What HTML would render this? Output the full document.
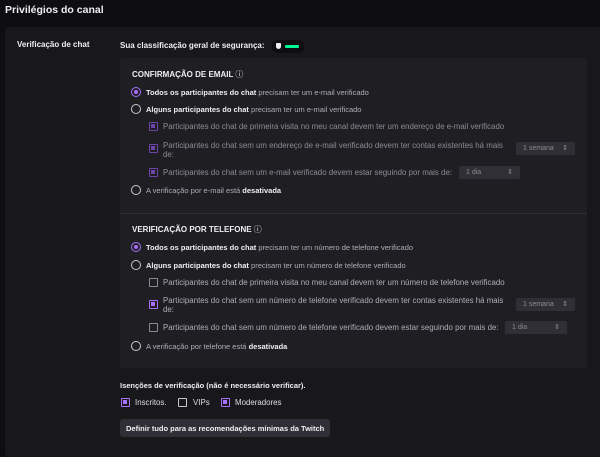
<!DOCTYPE html>
<html><head><meta charset="utf-8"><style>
*{margin:0;padding:0;box-sizing:border-box}
body{width:600px;height:448px;background:#0e0e10;font-family:"Liberation Sans",sans-serif;color:#dedee3;overflow:hidden;position:relative}
.a{position:absolute;white-space:nowrap;font-size:7.9px;line-height:9px;color:#adadb8}
.m{font-size:7.5px}
.b{font-weight:bold;color:#efeff1}
.r{position:absolute;width:10px;height:10px;border-radius:50%;border:1.5px solid #c8c8d0}
.r.on{border-color:#a970ff}
.r.on::after{content:"";position:absolute;left:1.5px;top:1.5px;width:4px;height:4px;border-radius:50%;background:#a970ff}
.c{position:absolute;width:9px;height:9px;border:1.3px solid #8b8b93;border-radius:1px}
.c.on{border-color:#6b46a8}
.c.on::after{content:"";position:absolute;left:1.2px;top:1.2px;width:4px;height:4px;background:#6b46a8}
.c.on2{border-color:#a970ff}
.c.on2::after{content:"";position:absolute;left:1.2px;top:1.2px;width:4px;height:4px;background:#a970ff}
.s{position:absolute;height:13px;background:#2f2f35;border-radius:2px;font-size:7px;color:#8b8b93;line-height:13px;padding-left:7px}
.s::after{content:"⇕";position:absolute;right:7px;top:0;font-size:7px}
.t{position:absolute;font-size:8px;font-weight:bold;color:#efeff1;white-space:nowrap}
.dim{color:#8b8b93}
</style></head><body>
<div class="a b" style="left:5px;top:3px;font-size:10.5px;line-height:14px">Privilégios do canal</div>
<div style="position:absolute;left:5px;top:27px;width:600px;height:430px;background:#18181b;border-radius:3px"></div>
<div class="a b" style="left:17px;top:40px;font-size:8px">Verificação de chat</div>
<div class="a b" style="left:120px;top:41px;font-size:8px">Sua classificação geral de segurança:</div>
<div style="position:absolute;left:272px;top:40px;width:32px;height:13px;border-radius:6px;background:#0e0e10"></div>
<div style="position:absolute;left:276px;top:43px;width:5px;height:6px;background:#efeff1;border-radius:1px 1px 3px 3px"></div>
<div style="position:absolute;left:285px;top:45px;width:14px;height:2.5px;background:#00f593;border-radius:1px"></div>
<div style="position:absolute;left:120px;top:58px;width:467px;height:310px;background:#1f1f23;border-radius:3px"></div>
<div style="position:absolute;left:120px;top:213px;width:467px;height:1px;background:#2c2c31"></div>

<div class="t" style="left:132px;top:69px">CONFIRMAÇÃO DE EMAIL <span style="font-weight:normal">ⓘ</span></div>
<div class="r on" style="left:131px;top:87px"></div>
<div class="a m" style="left:146px;top:87.5px"><span class="b">Todos os participantes do chat</span> precisam ter um e-mail verificado</div>
<div class="r" style="left:131px;top:104px"></div>
<div class="a m" style="left:146px;top:104.5px"><span class="b">Alguns participantes do chat</span> precisam ter um e-mail verificado</div>
<div class="c on" style="left:149px;top:122px"></div>
<div class="a dim" style="left:163px;top:121.5px">Participantes do chat de primeira visita no meu canal devem ter um endereço de e-mail verificado</div>
<div class="c on" style="left:149px;top:144px"></div>
<div class="a dim" style="left:163px;top:140.5px">Participantes do chat sem um endereço de e-mail verificado devem ter contas existentes há mais<br>de:</div>
<div class="s" style="left:516px;top:142px;width:59px">1 semana</div>
<div class="c on" style="left:149px;top:168px"></div>
<div class="a dim" style="left:163px;top:167.5px">Participantes do chat sem um e-mail verificado devem estar seguindo por mais de:</div>
<div class="s" style="left:459px;top:166px;width:61px">1 dia</div>
<div class="r" style="left:131px;top:185px"></div>
<div class="a m" style="left:146px;top:185.5px">A verificação por e-mail está <span class="b">desativada</span></div>

<div class="t" style="left:132px;top:224px">VERIFICAÇÃO POR TELEFONE <span style="font-weight:normal">ⓘ</span></div>
<div class="r on" style="left:131px;top:242px"></div>
<div class="a m" style="left:146px;top:242.5px"><span class="b">Todos os participantes do chat</span> precisam ter um número de telefone verificado</div>
<div class="r" style="left:131px;top:260px"></div>
<div class="a m" style="left:146px;top:260.5px"><span class="b">Alguns participantes do chat</span> precisam ter um número de telefone verificado</div>
<div class="c" style="left:149px;top:278px"></div>
<div class="a" style="left:163px;top:277.5px">Participantes do chat de primeira visita no meu canal devem ter um número de telefone verificado</div>
<div class="c on2" style="left:149px;top:300px"></div>
<div class="a" style="left:163px;top:295.5px">Participantes do chat sem um número de telefone verificado devem ter contas existentes há mais<br>de:</div>
<div class="s" style="left:516px;top:298px;width:59px">1 semana</div>
<div class="c" style="left:149px;top:323px"></div>
<div class="a" style="left:163px;top:322.5px">Participantes do chat sem um número de telefone verificado devem estar seguindo por mais de:</div>
<div class="s" style="left:505px;top:321px;width:62px">1 dia</div>
<div class="r" style="left:131px;top:341px"></div>
<div class="a m" style="left:146px;top:341.5px">A verificação por telefone está <span class="b">desativada</span></div>

<div class="a b m" style="left:120px;top:380.5px">Isenções de verificação (não é necessário verificar).</div>
<div class="c on2" style="left:121px;top:398px"></div>
<div class="a" style="left:135px;top:398px;color:#dedee3">Inscritos.</div>
<div class="c" style="left:178px;top:398px;border-color:#c8c8d0"></div>
<div class="a" style="left:193px;top:398px;color:#dedee3">VIPs</div>
<div class="c on2" style="left:221px;top:398px"></div>
<div class="a" style="left:235px;top:398px;color:#dedee3">Moderadores</div>
<div style="position:absolute;left:120px;top:419px;width:210px;height:18px;background:#2f2f35;border-radius:3px"></div>
<div class="a b m" style="left:126px;top:423.5px">Definir tudo para as recomendações mínimas da Twitch</div>
</body></html>
